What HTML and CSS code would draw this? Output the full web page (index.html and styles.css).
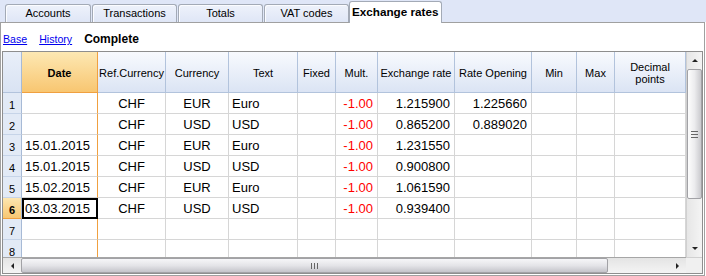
FILE: index.html
```html
<!DOCTYPE html>
<html>
<head>
<meta charset="utf-8">
<link rel="stylesheet" href="styles.css">
</head>
<body>
<div class="tabbar">
  <div class="tab">Accounts</div>
  <div class="tab w85">Transactions</div>
  <div class="tab w85">Totals</div>
  <div class="tab w85">VAT codes</div>
  <div class="tab active">Exchange rates</div>
</div>
<div class="panel">
  <div class="views">
    <a class="view-link">Base</a>
    <a class="view-link">History</a>
    <span class="view-current">Complete</span>
  </div>
  <div class="sheet">
    <div class="viewport">
      <div class="table">
        <div class="hd corner"></div>
        <div class="hd hd-sel"><b>Date</b></div>
        <div class="hd">Ref.Currency</div>
        <div class="hd">Currency</div>
        <div class="hd">Text</div>
        <div class="hd">Fixed</div>
        <div class="hd">Mult.</div>
        <div class="hd">Exchange rate</div>
        <div class="hd">Rate Opening</div>
        <div class="hd">Min</div>
        <div class="hd">Max</div>
        <div class="hd">Decimal<br>points</div>

        <div class="rn">1</div><div class="c l c-date"></div><div class="c m">CHF</div><div class="c m">EUR</div><div class="c l">Euro</div><div class="c"></div><div class="c r red">-1.00</div><div class="c r">1.215900</div><div class="c r">1.225660</div><div class="c"></div><div class="c"></div><div class="c"></div>
        <div class="rn">2</div><div class="c l c-date"></div><div class="c m">CHF</div><div class="c m">USD</div><div class="c l">USD</div><div class="c"></div><div class="c r red">-1.00</div><div class="c r">0.865200</div><div class="c r">0.889020</div><div class="c"></div><div class="c"></div><div class="c"></div>
        <div class="rn">3</div><div class="c l c-date">15.01.2015</div><div class="c m">CHF</div><div class="c m">EUR</div><div class="c l">Euro</div><div class="c"></div><div class="c r red">-1.00</div><div class="c r">1.231550</div><div class="c r"></div><div class="c"></div><div class="c"></div><div class="c"></div>
        <div class="rn">4</div><div class="c l c-date">15.01.2015</div><div class="c m">CHF</div><div class="c m">USD</div><div class="c l">USD</div><div class="c"></div><div class="c r red">-1.00</div><div class="c r">0.900800</div><div class="c r"></div><div class="c"></div><div class="c"></div><div class="c"></div>
        <div class="rn">5</div><div class="c l c-date">15.02.2015</div><div class="c m">CHF</div><div class="c m">EUR</div><div class="c l">Euro</div><div class="c"></div><div class="c r red">-1.00</div><div class="c r">1.061590</div><div class="c r"></div><div class="c"></div><div class="c"></div><div class="c"></div>
        <div class="rn rn-sel">6</div><div class="c l c-date cur">03.03.2015</div><div class="c m">CHF</div><div class="c m">USD</div><div class="c l">USD</div><div class="c"></div><div class="c r red">-1.00</div><div class="c r">0.939400</div><div class="c r"></div><div class="c"></div><div class="c"></div><div class="c"></div>
        <div class="rn">7</div><div class="c c-date"></div><div class="c"></div><div class="c"></div><div class="c"></div><div class="c"></div><div class="c"></div><div class="c"></div><div class="c"></div><div class="c"></div><div class="c"></div><div class="c"></div>
        <div class="rn">8</div><div class="c c-date"></div><div class="c"></div><div class="c"></div><div class="c"></div><div class="c"></div><div class="c"></div><div class="c"></div><div class="c"></div><div class="c"></div><div class="c"></div><div class="c"></div>
      </div>
    </div>
    <div class="vscroll">
      <div class="arrow-up"></div>
      <div class="vthumb"><span class="grip-h"></span></div>
      <div class="vspace"></div>
      <div class="arrow-down"></div>
    </div>
    <div class="hscroll">
      <div class="arrow-left"></div>
      <div class="hthumb"><span class="grip-v"></span></div>
      <div class="hspace"></div>
      <div class="arrow-right"></div>
    </div>
    <div class="corner-box"></div>
  </div>
</div>
</body>
</html>
```
FILE: styles.css
```css
* { box-sizing: border-box; }
html, body { margin: 0; padding: 0; background: #ffffff; }
body {
  width: 706px;
  height: 276px;
  overflow: hidden;
  font-family: "Liberation Sans", Arial, sans-serif;
  color: #000;
}

/* ---------- tabs ---------- */
.tabbar {
  height: 22px;
  background: #dfe6f7;
  display: flex;
  align-items: flex-end;
  padding-left: 5px;
  gap: 1px;
}
.tab {
  width: 86px;
  height: 18px;
  border: 1px solid #a3aab6;
  border-bottom: none;
  border-radius: 3px 3px 0 0;
  background: linear-gradient(#eef2fb, #dfe6f6);
  box-shadow: inset 1px 1px 0 #fbfcff;
  font-size: 11px;
  line-height: 17px;
  text-align: center;
  color: #000;
}
.tab.w85 { width: 85px; }
.tab.active {
  width: 93px;
  height: 22px;
  margin-left: -1px;
  margin-bottom: -1px;
  background: #ffffff;
  box-shadow: none;
  font-weight: bold;
  font-size: 11.7px;
  line-height: 19px;
  text-align: left;
  padding-left: 2px;
  position: relative;
  z-index: 1;
}

/* ---------- panel ---------- */
.panel {
  width: 705px;
  height: 254px;
  border: 1px solid #a0a0a0;
  padding: 0 1px 1px 1px;
  background: #fff;
}
.views {
  height: 28px;
  display: flex;
  align-items: baseline;
  padding: 9px 0 0 1px;
  gap: 12px;
}
.view-link {
  font-size: 10.6px;
  line-height: 14px;
  color: #0000ee;
  text-decoration: underline;
}
.view-current {
  font-size: 12px;
  font-weight: bold;
  line-height: 14px;
}

/* ---------- sheet ---------- */
.sheet {
  width: 701px;
  height: 223px;
  border: 1px solid #8e8e8e;
  display: grid;
  grid-template-columns: 683px 16px;
  grid-template-rows: 205px 16px;
}
.viewport {
  overflow: hidden;
}
.table {
  display: grid;
  grid-template-columns: 19px 76px 68px 63px 69px 38px 42px 77px 77px 45px 38px 71px;
  grid-template-rows: 41px;
  grid-auto-rows: 21px;
}
.hd {
  background: linear-gradient(#f8fafe, #dbe4f4);
  border-right: 1px solid #b2c3dc;
  border-bottom: 1px solid #b2c3dc;
  font-size: 11px;
  line-height: 12px;
  text-align: center;
  display: flex;
  align-items: center;
  justify-content: center;
  padding-top: 2px;
  white-space: nowrap;
  overflow: hidden;
}
.hd.corner {
  background: linear-gradient(#e9eff9, #d9e3f3);
  border-right-color: #a7bad6;
}
.hd.hd-sel {
  background: linear-gradient(#fde8b3, #f8c671);
  border-right: 1px solid #f0a040;
  border-bottom: 1px solid #f0a040;
}
.rn {
  background: #e2eaf6;
  border-right: 1px solid #a7bad6;
  border-bottom: 1px solid #c6d4e8;
  font-size: 11px;
  line-height: 14px;
  padding-top: 5px;
  text-align: center;
}
.rn.rn-sel {
  background: linear-gradient(#fde6b0, #f8c772);
  border-bottom: 1px solid #f0a040;
  font-weight: bold;
}
.c {
  border-right: 1px solid #d6d6d6;
  border-bottom: 1px solid #d6d6d6;
  font-size: 13px;
  line-height: 16px;
  padding-top: 3px;
  white-space: nowrap;
  overflow: hidden;
}
.c.l { text-align: left; padding-left: 3px; }
.c.m { text-align: center; }
.c.r { text-align: right; padding-right: 4px; }
.c.l.c-date { padding-left: 3px; }
.c.red { color: #ff0000; }
.c.c-date { border-right-color: #f0a040; }
.c.cur {
  outline: 2px solid #000;
  outline-offset: -2px;
  padding-left: 2px;
}

/* ---------- scrollbars ---------- */
.vscroll {
  background: linear-gradient(to right, #e6e6e6, #f4f4f4);
  border-left: 1px solid #d0d0d0;
  display: flex;
  flex-direction: column;
  align-items: stretch;
}
.arrow-up, .arrow-down {
  height: 17px;
  display: flex;
  align-items: center;
  justify-content: center;
}
.arrow-up::before {
  content: "";
  border-left: 3px solid transparent;
  border-right: 3px solid transparent;
  border-bottom: 3px solid #222;
}
.arrow-down::before {
  content: "";
  border-left: 3px solid transparent;
  border-right: 3px solid transparent;
  border-top: 3px solid #222;
}
.vthumb {
  height: 130px;
  border: 1px solid #a2a2a6;
  border-radius: 2px;
  background: linear-gradient(to right, #fdfdfd, #ececee 50%, #cacace);
  display: flex;
  align-items: center;
  justify-content: center;
}
.grip-h {
  width: 7px;
  height: 7px;
  border-top: 1px solid #666;
  border-bottom: 1px solid #666;
  background: linear-gradient(transparent 2px, #666 2px, #666 3px, transparent 3px);
}
.vspace { flex: 1; }

.hscroll {
  background: linear-gradient(#e4e4e4, #f4f4f4);
  border-top: 1px solid #a6a6a6;
  display: flex;
  align-items: stretch;
}
.arrow-left, .arrow-right {
  width: 18px;
  display: flex;
  align-items: center;
  justify-content: center;
}
.arrow-left::before {
  content: "";
  border-top: 3px solid transparent;
  border-bottom: 3px solid transparent;
  border-right: 3px solid #222;
}
.arrow-right::before {
  content: "";
  border-top: 3px solid transparent;
  border-bottom: 3px solid transparent;
  border-left: 3px solid #222;
}
.hthumb {
  width: 587px;
  border: 1px solid #a2a2a6;
  border-radius: 2px;
  background: linear-gradient(#f6f6f8, #e4e4e8 50%, #c4c4ca);
  display: flex;
  align-items: center;
  justify-content: center;
}
.grip-v {
  width: 7px;
  height: 6px;
  border-left: 1px solid #666;
  border-right: 1px solid #666;
  background: linear-gradient(to right, transparent 2px, #666 2px, #666 3px, transparent 3px);
}
.hspace { flex: 1; }
.corner-box {
  background: #f0f0f0;
  border-top: 1px solid #d0d0d0;
}
```
